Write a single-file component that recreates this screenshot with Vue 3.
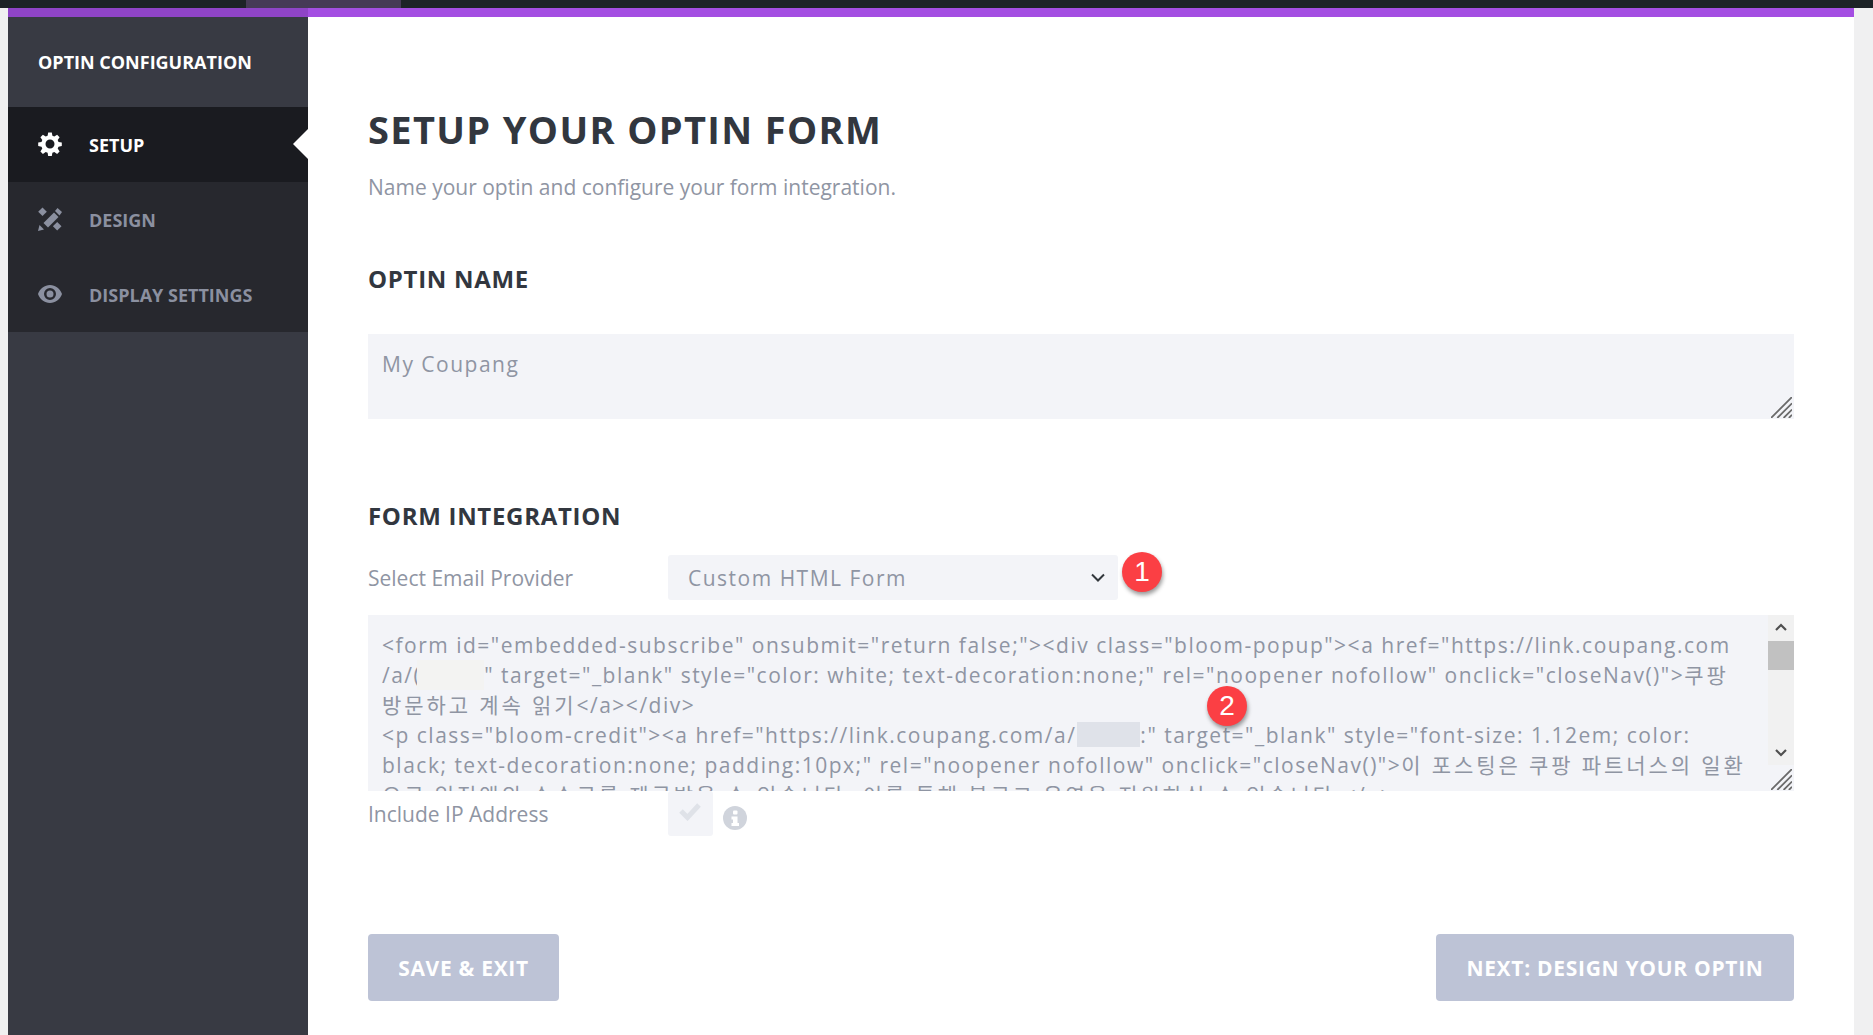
<script setup>
const codeLines = [
  [{ t: '<form id="embedded-subscribe" onsubmit="return false;"><div class="bloom-popup"><a href="https://link.coupang.com' }],
  [{ t: '/a/(' }, { mask: 'soft' }, { t: '" target="_blank" style="color: white; text-decoration:none;" rel="noopener nofollow" onclick="closeNav()">' }, { ko: '쿠팡' }],
  [{ ko: '방문하고 계속 읽기' }, { t: '</a></div>' }],
  [{ t: '<p class="bloom-credit"><a href="https://link.coupang.com/a/' }, { mask: 'hard' }, { t: ':" target="_blank" style="font-size: 1.12em; color:' }],
  [{ t: 'black; text-decoration:none; padding:10px;" rel="noopener nofollow" onclick="closeNav()">' }, { ko: '이 포스팅은 쿠팡 파트너스의 일환' }],
  [{ ko: '으로 일정액의 수수료를 제공받을 수 있습니다. 이를 통해 블로그 운영을 지원하실 수 있습니다.' }, { t: '</p>' }]
]
</script>

<template>
  <div class="page">
    <div class="topbar"><span class="topbar-seg"></span></div>
    <div class="shell">
      <aside class="side">
        <div class="side-head">OPTIN CONFIGURATION</div>
        <nav class="side-nav">
          <a class="nav-item active">
            <svg class="nav-icon" viewBox="0 0 24 24"><path fill="#fff" fill-rule="evenodd" d="M10.200 .5h3.600l.6 3.300 1.900.8 2.800-1.900 2.500 2.500-1.900 2.800.8 1.900 3.300.6v3.600l-3.300.6-.8 1.900 1.900 2.800-2.500 2.500-2.800-1.900-1.900.8-.6 3.300h-3.600l-.6-3.300-1.900-.8-2.800 1.900-2.500-2.500 1.900-2.800-.8-1.900-3.300-.6v-3.600l3.300-.6.8-1.900-1.900-2.800 2.500-2.500 2.800 1.900 1.900-.8zM12 7.500a4.500 4.500 0 1 0 0 9 4.500 4.500 0 0 0 0-9z"/></svg>
            <span>SETUP</span>
          </a>
          <a class="nav-item">
            <svg class="nav-icon" viewBox="0 0 24 24"><g fill="#8b90a0"><path d="M4.500.5 8.800 4.800 4.500 9.100.2 4.800z"/><path d="M19.200 14.900 23.500 19.200 19.200 23.500 14.900 19.200z"/><path d="M5.500 16 16 5.500 20.500 10 10 20.500z"/><path d="M17 4 19.500 1 24 5 21.500 8.500z"/><path d="M0 24 1.500 18 6 22.500z"/></g></svg>
            <span>DESIGN</span>
          </a>
          <a class="nav-item">
            <svg class="nav-icon" viewBox="0 0 24 24"><path fill="#8b90a0" fill-rule="evenodd" d="M12 3c5.500 0 10 3.600 12 9-2 5.400-6.500 9-12 9S2 17.400 0 12C2 6.600 6.500 3 12 3zm0 3a6 6 0 1 0 0 12 6 6 0 0 0 0-12zm0 2.500a3.500 3.500 0 1 1 0 7 3.500 3.500 0 0 1 0-7z"/></svg>
            <span>DISPLAY SETTINGS</span>
          </a>
        </nav>
      </aside>

      <main class="content">
        <h1 class="title">SETUP YOUR OPTIN FORM</h1>
        <p class="subtitle">Name your optin and configure your form integration.</p>

        <h2 class="section first">OPTIN NAME</h2>
        <div class="name-box">
          My Coupang
          <svg class="grip" viewBox="0 0 20 20"><path d="M20 0 0 20M20 6 6 20M20 12 12 20M20 17 17 20" stroke="#6a6a6a" stroke-width="1.700" fill="none"/></svg>
        </div>

        <h2 class="section second">FORM INTEGRATION</h2>
        <div class="row provider">
          <span class="label">Select Email Provider</span>
          <div class="select">
            Custom HTML Form
            <svg class="chev" viewBox="0 0 16 10"><path d="M2 2l6 6 6-6" stroke="#32373c" stroke-width="2" fill="none"/></svg>
          </div>
          <span class="badge badge-one">1</span>
        </div>

        <div class="code-box">
          <div class="code-text">
            <div v-for="(line, i) in codeLines" :key="i" class="code-line">
              <template v-for="(part, j) in line" :key="j">
                <span v-if="part.mask" class="mask" :class="'mask-' + part.mask"></span>
                <span v-else-if="part.ko" class="ko">{{ part.ko }}</span>
                <template v-else>{{ part.t }}</template>
              </template>
            </div>
          </div>
          <div class="scrollbar">
            <svg class="arrow up" viewBox="0 0 14 10"><path d="M2 8l5-5 5 5" stroke="#505050" stroke-width="2.200" fill="none"/></svg>
            <div class="track"><div class="thumb"></div></div>
            <svg class="arrow down" viewBox="0 0 14 10"><path d="M2 2l5 5 5-5" stroke="#505050" stroke-width="2.200" fill="none"/></svg>
          </div>
          <svg class="grip" viewBox="0 0 20 20"><path d="M20 0 0 20M20 6 6 20M20 12 12 20M20 17 17 20" stroke="#6a6a6a" stroke-width="1.700" fill="none"/></svg>
          <span class="badge badge-two">2</span>
        </div>

        <div class="row include">
          <span class="label">Include IP Address</span>
          <div class="check">
            <svg viewBox="0 0 24 20"><path d="M3 10l6.500 6.500L21 4" stroke="#dfe2e8" stroke-width="5" fill="none"/></svg>
          </div>
          <svg class="info" viewBox="0 0 24 24"><circle cx="12" cy="12" r="12" fill="#d0d4dc"/><rect x="10" y="4.500" width="4.500" height="4" rx="1" fill="#fff"/><path d="M8.500 10.500h6V17h1.500v3H8.500v-3H10v-3.500H8.500z" fill="#fff"/></svg>
        </div>

        <div class="actions">
          <button class="btn btn-save">SAVE &amp; EXIT</button>
          <button class="btn btn-next">NEXT: DESIGN YOUR OPTIN</button>
        </div>
      </main>
    </div>
  </div>
</template>

<style>
html, body { margin: 0; background: #f0f0f1; overflow: hidden; }
</style>

<style scoped>
.page {
  height: 1035px;
  display: flex;
  flex-direction: column;
  overflow: hidden;
  font-family: "Open Sans", "Noto Sans CJK KR", sans-serif;
  background: #f0f0f1;
}
.topbar { height: 8px; background: #1d2327; flex: none; display: flex; }
.topbar-seg { margin-left: 246px; width: 155px; background: #463a56; }
.shell { flex: 1; display: flex; margin: 0 19px 0 8px; min-height: 0; }
.side {
  width: 300px;
  flex: none;
  background: #383a43;
  border-top: 9px solid #8f44c7;
}
.side-head {
  height: 90px;
  display: flex;
  align-items: center;
  padding-left: 30px;
  color: #fff;
  font-size: 18px;
  font-weight: 700;
}
.side-nav { background: #27282e; }
.nav-item {
  height: 75px;
  display: flex;
  align-items: center;
  padding-left: 30px;
  gap: 27px;
  color: #8b90a0;
  font-size: 18px;
  font-weight: 700;
  position: relative;
}
.nav-item.active { background: #1a1b20; color: #fff; }
.nav-item.active::after {
  content: "";
  position: absolute;
  right: 0;
  top: 22px;
  border: 15px solid transparent;
  border-right-color: #fff;
  border-left: 0;
}
.nav-icon { width: 24px; height: 24px; flex: none; margin-top: -2px; }
.content {
  flex: 1;
  background: #fff;
  border-top: 9px solid #a44ee2;
  padding: 0 60px;
  min-width: 0;
}
.title {
  margin: 89px 0 0;
  font-size: 38px;
  line-height: 46px;
  font-weight: 700;
  color: #32373f;
  letter-spacing: 1.350px;
}
.subtitle {
  margin: 21px 0 0;
  font-size: 21px;
  line-height: 28px;
  color: #8f95a3;
}
.section {
  margin: 0;
  font-size: 24px;
  line-height: 30px;
  font-weight: 700;
  color: #32373f;
  letter-spacing: .7px;
}
.section.first { margin-top: 63px; }
.section.second { margin-top: 82px; }
.name-box {
  position: relative;
  box-sizing: border-box;
  height: 85px;
  margin-top: 40px;
  padding: 17px 14px;
  background: #f3f4f8;
  color: #8f95a3;
  font-size: 21px;
  line-height: 27px;
  letter-spacing: 1.500px;
}
.grip { position: absolute; right: 2px; bottom: 1px; width: 21px; height: 21px; }
.row { display: flex; align-items: center; position: relative; }
.label { width: 300px; flex: none; color: #8f95a3; font-size: 21px; }
.provider { margin-top: 24px; }
.select {
  position: relative;
  width: 450px;
  height: 45px;
  box-sizing: border-box;
  padding-left: 20px;
  display: flex;
  align-items: center;
  background: #f3f4f8;
  border-radius: 3px;
  color: #8f95a3;
  font-size: 21px;
  letter-spacing: 1.500px;
}
.chev { position: absolute; right: 12px; top: 17px; width: 16px; height: 11px; }
.badge {
  position: absolute;
  width: 40px;
  height: 40px;
  border-radius: 50%;
  background: #fb3f44;
  color: #fff;
  font-size: 28px;
  line-height: 40px;
  text-align: center;
  box-shadow: 1px 3px 4px rgba(0, 0, 0, .4);
  font-family: "Liberation Sans", sans-serif;
}
.badge-one { left: 754px; top: -3px; }
.badge-two { left: 839px; top: 71px; }
.code-box {
  position: relative;
  height: 176px;
  margin-top: 15px;
  background: #f3f4f8;
}
.code-text { height: 176px; overflow: hidden; padding: 15px 0 0 14px; box-sizing: border-box; }
.code-line {
  height: 30px;
  line-height: 30px;
  white-space: nowrap;
  color: #8f95a3;
  font-size: 21px;
  letter-spacing: 1.500px;
}
.ko { letter-spacing: 2.900px; }
.mask { display: inline-block; vertical-align: top; }
.mask-soft { width: 67px; height: 30px; background: #f3f3f2; margin-left: -4px; }
.mask-hard { width: 63px; height: 25px; background: #dfe2e9; margin: 2px 0 0 1px; }
.scrollbar {
  position: absolute;
  right: 0;
  top: 0;
  width: 26px;
  height: 150px;
  background: #f1f1f1;
  display: flex;
  flex-direction: column;
  align-items: center;
}
.arrow { width: 14px; height: 10px; flex: none; }
.arrow.up { margin: 7px 0 9px; }
.arrow.down { margin: 10px 0 7px; }
.track { flex: 1; width: 100%; }
.thumb { height: 29px; background: #c1c1c1; }
.include { height: 45px; }
.check {
  width: 45px;
  height: 45px;
  background: #f3f4f8;
  border-radius: 3px;
  flex: none;
  display: flex;
  justify-content: center;
  padding: 10px 2px 0 0;
  box-sizing: border-box;
}
.check svg { width: 24px; height: 20px; }
.info { width: 24px; height: 24px; margin: 9px 0 0 10px; flex: none; }
.actions { display: flex; justify-content: space-between; margin-top: 98px; }
.btn {
  height: 67px;
  border: 0;
  border-radius: 4px;
  background: #bdc3d6;
  color: #fff;
  font-family: inherit;
  font-size: 21px;
  font-weight: 700;
  letter-spacing: .7px;
}
.btn-save { width: 191px; }
.btn-next { width: 358px; }
</style>
